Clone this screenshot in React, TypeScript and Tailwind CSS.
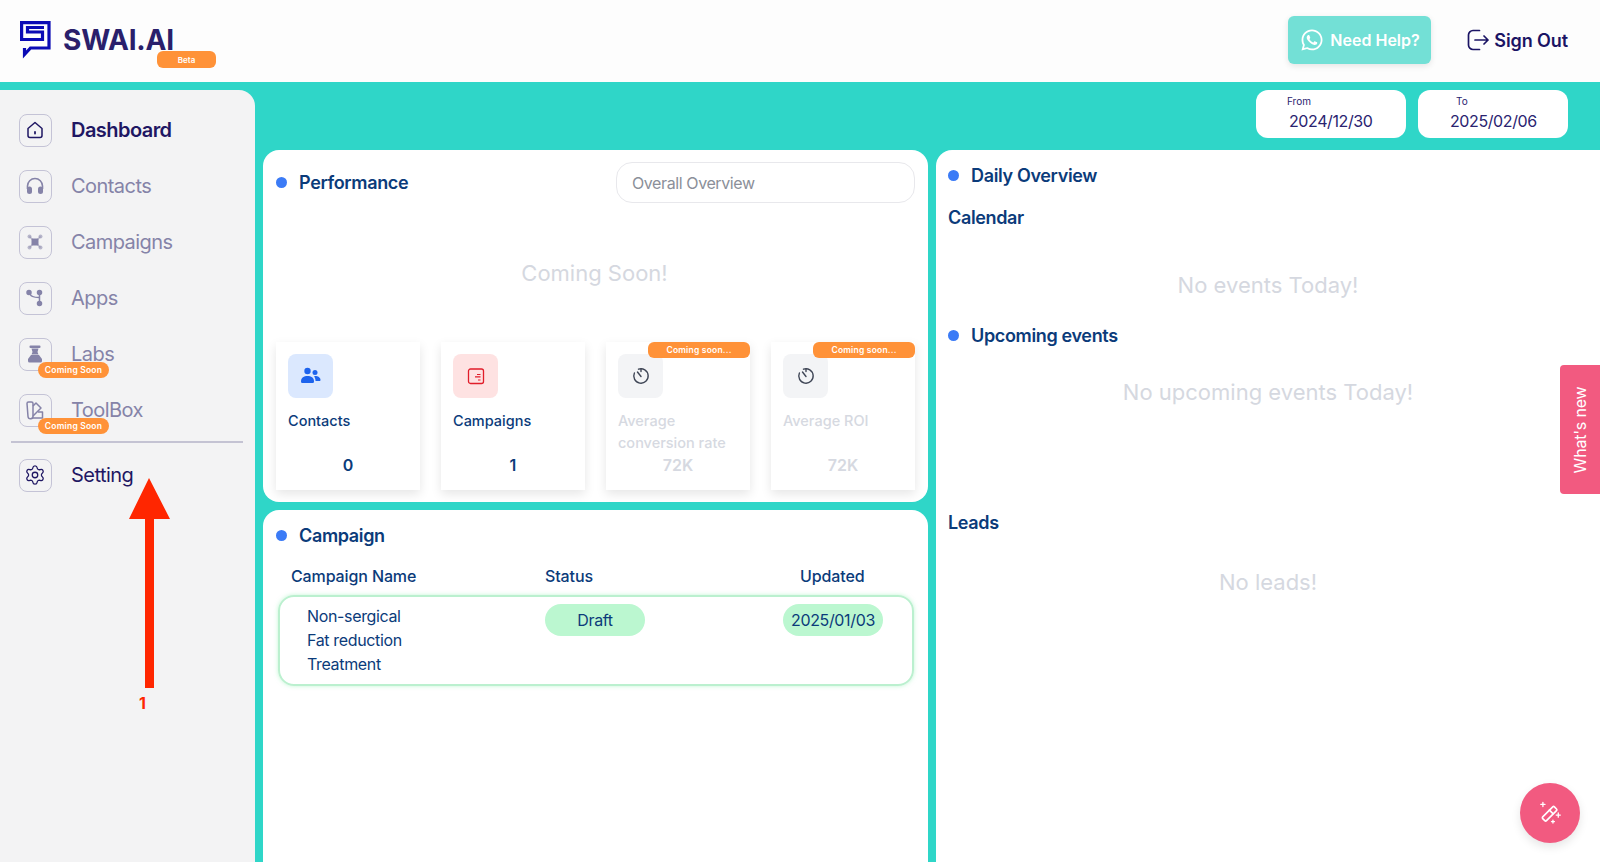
import { ReactNode } from 'react'
import { Settings } from 'lucide-react'
import { FaWhatsapp } from 'react-icons/fa'

function Logo() {
  return (
    <svg width="32" height="38" viewBox="0 0 32 38" fill="none" stroke="#0b0bb5" strokeWidth="3.200">
      <path d="M1.600 19V1.600H29V27H10.500L4.500 33.500V27" />
      <path d="M0 18.500H22.500V11H7.500V6.500H24" />
    </svg>
  )
}

const HomeIcon = (
  <svg width="20" height="20" viewBox="0 0 20 20" fill="none" stroke="currentColor" strokeWidth="1.500">
    <path d="M3 8.500 10 2.500l7 6v7a2 2 0 0 1-2 2H5a2 2 0 0 1-2-2Z" strokeLinejoin="round" />
    <path d="M10 12v1.500" strokeLinecap="round" strokeWidth="1.800" />
  </svg>
)

const HeadphonesIcon = (
  <svg width="20" height="20" viewBox="0 0 20 20" fill="none" stroke="currentColor" strokeWidth="1.600">
    <path d="M2.500 13V10a7.500 7.500 0 0 1 15 0v3" />
    <rect x="2" y="10.500" width="5" height="7.500" rx="2.500" fill="currentColor" stroke="none" />
    <rect x="13" y="10.500" width="5" height="7.500" rx="2.500" fill="currentColor" stroke="none" />
  </svg>
)

const CampaignsIcon = (
  <svg width="20" height="20" viewBox="0 0 20 20" fill="currentColor">
    <path d="M4.500 4.500l11 11M15.500 4.500l-11 11" stroke="currentColor" strokeWidth="1.500" opacity="0.5" />
    <rect x="6.500" y="6.500" width="7" height="7" rx="0.500" />
    <circle cx="4.500" cy="4.500" r="2" opacity="0.55" />
    <circle cx="15.500" cy="4.500" r="2" opacity="0.55" />
    <circle cx="4.500" cy="15.500" r="2" opacity="0.55" />
    <circle cx="15.500" cy="15.500" r="2" opacity="0.55" />
  </svg>
)

const AppsIcon = (
  <svg width="20" height="20" viewBox="0 0 20 20" fill="none" stroke="currentColor" strokeWidth="1.500">
    <circle cx="4" cy="4.500" r="2" fill="currentColor" />
    <circle cx="14.500" cy="4.500" r="2" fill="currentColor" />
    <circle cx="14.500" cy="15.500" r="2" fill="currentColor" />
    <path d="M14.500 5v10M5 5.500c.5 3 3 4 9 4" />
  </svg>
)

const LabsIcon = (
  <svg width="20" height="20" viewBox="0 0 20 20" fill="currentColor">
    <rect x="4.500" y="1.500" width="11" height="2.500" rx="1" />
    <path d="M6.500 4.500h7l-1 3.500 1 2.500h-7l1-2.500Z" />
    <path d="M6 11h8l3 4v2a1.500 1.500 0 0 1-1.500 1.500h-11A1.500 1.500 0 0 1 3 17v-2Z" />
  </svg>
)

const ToolboxIcon = (
  <svg width="20" height="20" viewBox="0 0 20 20" fill="none" stroke="currentColor" strokeWidth="1.500">
    <path d="M2 3.500A1.500 1.500 0 0 1 3.500 2h3A1.500 1.500 0 0 1 8 3.500V16a2.500 2.500 0 0 1-5 .5Z" strokeLinejoin="round" />
    <path d="M8 6l3-3 5 5-8 8" strokeLinejoin="round" />
    <path d="M7 18h10.500v-6H13" strokeLinejoin="round" />
  </svg>
)

const SignOutIcon = (
  <svg width="22" height="22" viewBox="0 0 22 22" fill="none" stroke="currentColor" strokeWidth="1.700" strokeLinecap="round" strokeLinejoin="round">
    <path d="M12.500 1.500H6a4.500 4.500 0 0 0-4.500 4.500v10A4.500 4.500 0 0 0 6 20.500h6.500" />
    <path d="M8 11h13M17 7l4 4-4 4" />
  </svg>
)

const WandIcon = (
  <svg width="26" height="26" viewBox="0 0 22 22" fill="none" stroke="currentColor" strokeWidth="1.400" strokeLinecap="round">
    <rect x="-2" y="-7" width="4.500" height="14" rx="1" transform="translate(10.500 11.500) rotate(45)" />
    <path d="M10.500 8.500l3 3" />
    <path d="M5 2v3.500M3.250 3.750h3.500M18 11v3.500M16.250 12.750h3.500M13.500 17v2.500M12.250 18.250h2.500" strokeWidth="1.100" />
  </svg>
)

function NavItem({ icon, label, tone, badge, weight }: { icon: ReactNode; label: string; tone: string; badge?: boolean; weight?: string }) {
  return (
    <div className={`relative flex items-center h-[56px] ${tone}`}>
      <div className="flex items-center justify-center w-[33px] h-[33px] ml-[18.5px] rounded-lg border border-[#c4c3d6]">{icon}</div>
      <span className={`ml-[19.5px] text-[20px] tracking-[-0.55px] ${weight ?? ''}`}>{label}</span>
      {badge && (
        <span className="absolute left-[38px] top-[36px] w-[71px] h-[16px] flex items-center justify-center rounded-lg bg-[#ff9238] text-white text-[8.500px] font-semibold tracking-[0.2px]">
          Coming Soon
        </span>
      )}
    </div>
  )
}

function Sidebar() {
  return (
    <aside className="relative w-[255px] mt-2 pt-[12px] bg-[#f3f3f4] rounded-tr-2xl shrink-0">
      <NavItem icon={HomeIcon} label="Dashboard" tone="text-[#1f1763]" weight="font-semibold" />
      <NavItem icon={HeadphonesIcon} label="Contacts" tone="text-[#8583a8]" />
      <NavItem icon={CampaignsIcon} label="Campaigns" tone="text-[#8583a8]" />
      <NavItem icon={AppsIcon} label="Apps" tone="text-[#8583a8]" />
      <NavItem icon={LabsIcon} label="Labs" tone="text-[#8583a8]" badge />
      <NavItem icon={ToolboxIcon} label="ToolBox" tone="text-[#8583a8]" badge />
      <div className="h-[2px] mx-[11px] mt-[3px] mb-[4px] w-[232px] bg-[#c4c3d3]" />
      <NavItem icon={<Settings size={22} strokeWidth={1.400} />} label="Setting" tone="text-[#1f1763]" />

      {/* red annotation arrow */}
      <svg className="absolute left-[125px] top-[388px]" width="50" height="212" viewBox="0 0 50 212">
        <path d="M24 0 45 41H29V210H20V41H4Z" fill="#ff2600" />
      </svg>
      <span className="absolute left-[139px] top-[601px] text-[#ff2600] text-[16px] font-bold">1</span>
    </aside>
  )
}

function SectionTitle({ children }: { children: ReactNode }) {
  return (
    <div className="flex items-center gap-[12px]">
      <span className="w-[11px] h-[11px] rounded-full bg-[#3b7bf6]" />
      <h2 className="text-[18px] font-semibold text-[#0b3b7a] tracking-[-0.35px]">{children}</h2>
    </div>
  )
}

function DateBox({ label, value, labelPad, valuePad }: { label: string; value: string; labelPad: string; valuePad: string }) {
  return (
    <div className="w-[150px] h-[48px] bg-white rounded-xl text-[#2a2370]">
      <div className={`text-[10px] leading-[12px] pt-[5px] ${labelPad}`}>{label}</div>
      <div className={`text-[16px] leading-[24px] mt-[2px] tracking-[-0.4px] ${valuePad}`}>{value}</div>
    </div>
  )
}

const ClockIcon = (
  <svg width="18" height="18" viewBox="0 0 18 18" fill="none" stroke="#3f4656" strokeWidth="1.400">
    <path d="M6.500 2.200A7.200 7.200 0 1 1 2.400 6" strokeLinecap="round" />
    <path d="M5.500 5 9 9.500" strokeLinecap="round" />
    <path d="M9 2v2.500" strokeLinecap="round" />
  </svg>
)

const UsersIcon = (
  <svg width="20" height="18" viewBox="0 0 20 18" fill="#1d63ed">
    <circle cx="6.500" cy="4" r="3.200" />
    <circle cx="14" cy="5.500" r="2.500" />
    <path d="M0 14.500C0 10.500 3 9 6.500 9s6.500 1.500 6.500 5.500c0 1-.8 1.500-1.500 1.500h-10C.8 16 0 15.500 0 14.500Z" />
    <path d="M14 9c3 0 5.500 1.500 5.500 4 0 .8-.5 1-1 1H14.500c0-2-.5-3.500-1.500-4.500Z" />
  </svg>
)

const CampaignIcon = (
  <svg width="18" height="18" viewBox="0 0 18 18" fill="none" stroke="#e11d2a" strokeWidth="1.300">
    <rect x="1.500" y="2" width="15" height="14.500" rx="2" />
    <path d="M10 7.500h3.500M8 9.800h5.500M11 13h2.500" strokeWidth="1.200" />
  </svg>
)

function StatCard({ icon, tint, label, value, muted }: { icon: ReactNode; tint: string; label: string; value: string; muted?: boolean }) {
  return (
    <div className="relative w-[144px] h-[148px] bg-white shadow-[0_4px_10px_rgba(0,0,0,0.1)] px-[12px] pt-[12px]">
      {muted && (
        <span className="absolute right-0 top-0 w-[102px] h-[16px] flex items-center justify-center rounded-md bg-[#ff9238] text-white text-[8.500px] font-semibold tracking-[0.2px]">
          Coming soon...
        </span>
      )}
      <div className={`flex items-center justify-center w-[45px] h-[44px] rounded-lg ${tint}`}>{icon}</div>
      <div className={`mt-[12px] h-[43px] text-[14.500px] leading-[22px] font-medium ${muted ? 'text-[#d6d9e1]' : 'text-[#0b3b7a]'}`}>{label}</div>
      <div className={`text-center text-[16px] leading-[24px] font-semibold ${muted ? 'text-[#d6d9e1]' : 'text-[#0b3b7a]'}`}>{value}</div>
    </div>
  )
}

function Performance() {
  return (
    <section className="h-[352px] bg-white rounded-2xl pl-[13px] pr-[13px]">
      <div className="flex items-center justify-between pt-[12px]">
        <SectionTitle>Performance</SectionTitle>
        <div className="w-[299px] h-[41px] flex items-center pl-[15px] rounded-2xl border border-[#e8e8ec] text-[16px] text-[#8b8f99] tracking-[-0.4px]">Overall Overview</div>
      </div>
      <div className="h-[139px] pt-[52px] pr-[2px] text-center text-[22px] leading-[36px] text-[#d5d8e0]">Coming Soon!</div>
      <div className="flex gap-[21px]">
        <StatCard icon={UsersIcon} tint="bg-[#dbe8fe]" label="Contacts" value="0" />
        <StatCard icon={CampaignIcon} tint="bg-[#fee2e2]" label="Campaigns" value="1" />
        <StatCard icon={ClockIcon} tint="bg-[#f3f4f6]" label="Average conversion rate" value="72K" muted />
        <StatCard icon={ClockIcon} tint="bg-[#f3f4f6]" label="Average ROI" value="72K" muted />
      </div>
    </section>
  )
}

function Campaign() {
  return (
    <section className="flex-1 bg-white rounded-t-2xl px-[13px] pt-[12px] text-[#0b3b7a]">
      <SectionTitle>Campaign</SectionTitle>
      <div className="grid grid-cols-[254px_255px_1fr] mt-[15px] pl-[15px] text-[16px] leading-[24px] font-medium tracking-[-0.12px]">
        <span>Campaign Name</span>
        <span>Status</span>
        <span>Updated</span>
      </div>
      <div className="grid grid-cols-[238px_238px_1fr] mt-[7px] ml-[2px] mr-[1px] h-[91px] rounded-2xl border-2 border-[#bbf0cf] pl-[27px] pt-[7px] text-[16px] tracking-[-0.35px] shadow-[0_0_4px_rgba(134,239,172,0.5)]">
        <div className="leading-[24px] whitespace-pre-line">{'Non-sergical\nFat reduction\nTreatment'}</div>
        <div className="h-[32px] w-[100px] flex items-center justify-center rounded-2xl bg-[#bbf7d0]">Draft</div>
        <div className="h-[32px] w-[100px] flex items-center justify-center rounded-2xl bg-[#bbf7d0]">2025/01/03</div>
      </div>
    </section>
  )
}

function DailyOverview() {
  const empty = 'text-center text-[22px] leading-[36px] text-[#d5d8e0]'
  return (
    <section className="h-full bg-white rounded-tl-2xl px-[12px] pt-[12px] text-[#0b3b7a]">
      <SectionTitle>Daily Overview</SectionTitle>
      <h3 className="mt-[15px] text-[18px] leading-[27px] font-semibold tracking-[-0.35px]">Calendar</h3>
      <div className={`mt-[36px] ${empty}`}>No events Today!</div>
      <div className="mt-[19px]"><SectionTitle>Upcoming events</SectionTitle></div>
      <div className={`mt-[25px] ${empty}`}>No upcoming events Today!</div>
      <h3 className="mt-[99px] text-[18px] leading-[27px] font-semibold tracking-[-0.35px]">Leads</h3>
      <div className={`mt-[28px] ${empty}`}>No leads!</div>
    </section>
  )
}

export default function App() {
  return (
    <div className="relative flex flex-col h-[862px] overflow-hidden font-['Inter',sans-serif] bg-[#2fd6c8]">
      <header className="flex items-center justify-between h-[82px] shrink-0 bg-[#fdfdfd] pl-[20px] pr-[32px] pb-[2px]">
        <div className="relative flex items-center gap-[11px]">
          <Logo />
          <span className="text-[28px] font-bold text-[#2a1f6b] tracking-[-0.2px]">SWAI.AI</span>
          <span className="absolute left-[137px] top-[32px] w-[59px] h-[17px] flex items-center justify-center rounded-md bg-[#ff9238] text-white text-[8px] font-semibold">Beta</span>
        </div>
        <div className="flex items-center gap-[36px]">
          <button className="flex items-center gap-[6px] w-[143px] h-[48px] pl-[12px] rounded-md bg-[#73e0d6] text-white text-[16px] font-semibold shadow-[0_2px_6px_rgba(0,0,0,0.1)]">
            <FaWhatsapp size={24} />
            Need Help?
          </button>
          <button className="flex items-center gap-[5px] text-[18px] font-semibold text-[#1b1464] tracking-[-0.1px]">
            {SignOutIcon}
            Sign Out
          </button>
        </div>
      </header>

      <div className="flex flex-1 min-h-0">
        <Sidebar />
        <main className="flex flex-col flex-1 min-w-0">
          <div className="flex justify-end gap-[12px] h-[68px] pt-[8px] pr-[32px] shrink-0">
            <DateBox label="From" value="2024/12/30" labelPad="pl-[31px]" valuePad="pl-[33px]" />
            <DateBox label="To" value="2025/02/06" labelPad="pl-[38px]" valuePad="pl-[32px]" />
          </div>
          <div className="grid grid-cols-[665px_1fr] gap-[8px] flex-1 min-h-0 pl-[8px]">
            <div className="flex flex-col gap-[8px] min-h-0">
              <Performance />
              <Campaign />
            </div>
            <DailyOverview />
          </div>
        </main>
      </div>

      {/* floating widgets */}
      <div className="absolute right-0 top-[365px] w-[40px] h-[129px] flex items-center justify-center rounded-l-sm bg-[#f25a80]">
        <span className="-rotate-90 whitespace-nowrap text-white text-[16px] tracking-[-0.2px]">What's new</span>
      </div>
      <button className="absolute left-[1520px] top-[783px] w-[60px] h-[60px] flex items-center justify-center rounded-full bg-[#f25a80] text-white shadow-[0_4px_10px_rgba(0,0,0,0.1)]">
        {WandIcon}
      </button>
    </div>
  )
}
